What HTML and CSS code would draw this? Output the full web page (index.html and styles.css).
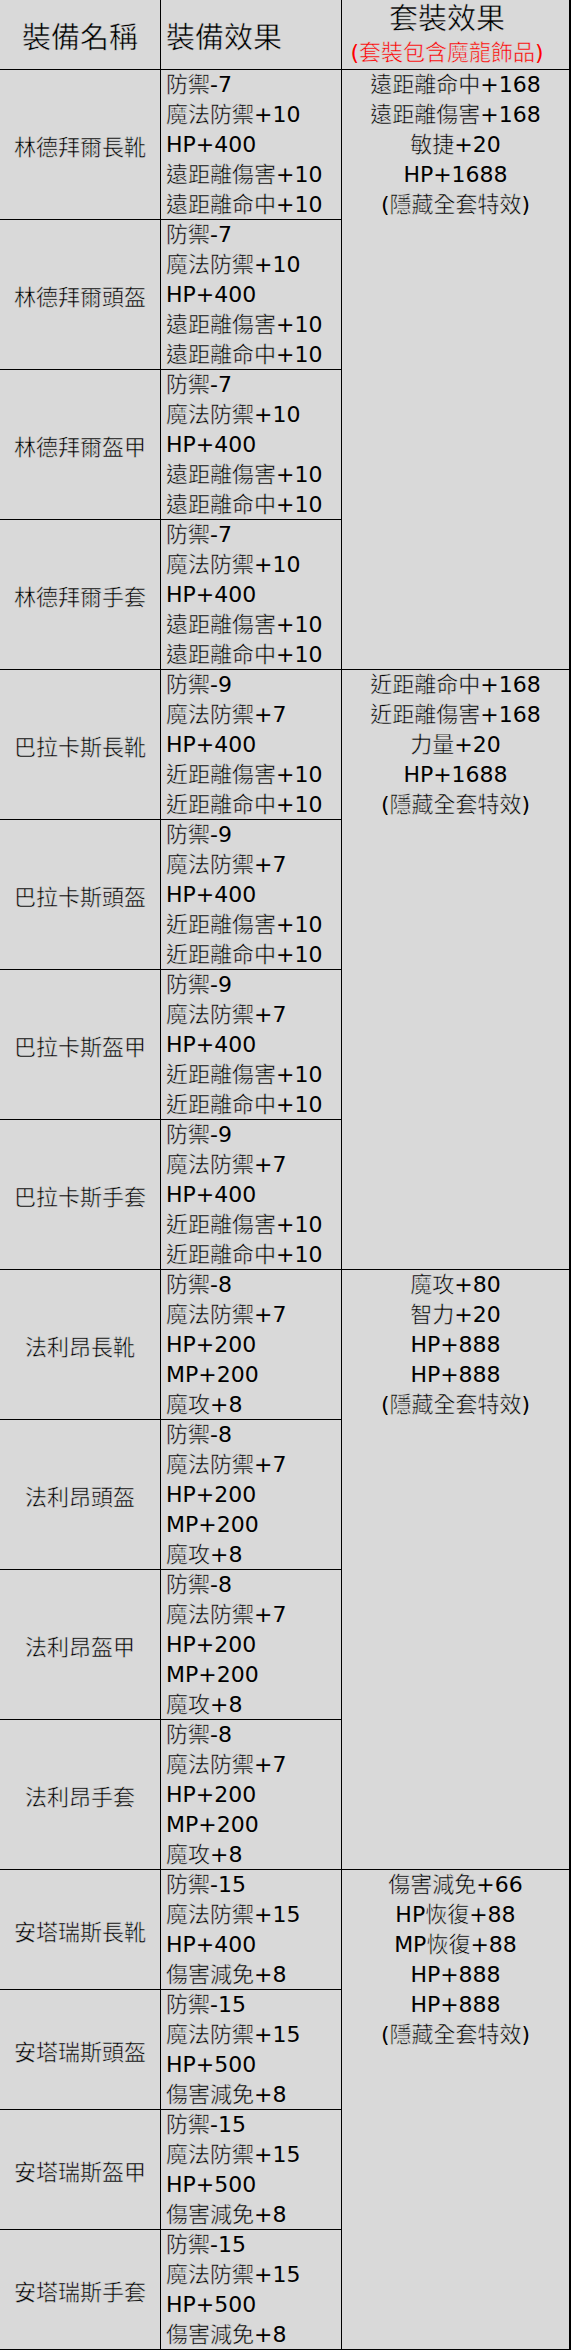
FILE: index.html
```html
<!DOCTYPE html>
<html lang="zh-Hant">
<head>
<meta charset="utf-8">
<title>裝備套裝效果</title>
<link rel="stylesheet" href="styles.css">
</head>
<body>
<div class="table">
  <div class="cell head head-name">裝備名稱</div>
  <div class="cell head head-effect">裝備效果</div>
  <div class="cell head head-set">
    <div class="head-set-title">套裝效果</div>
    <div class="head-set-note"><span class="n">(</span>套裝包含魔龍飾品<span class="n">)</span></div>
  </div>

  <!-- 林德拜爾 -->
  <div class="cell name r2">林德拜爾長靴</div>
  <div class="cell effect r2"><div class="ln">防禦<span class="n">-7</span></div><div class="ln">魔法防禦<span class="n">+10</span></div><div class="ln"><span class="n">HP+400</span></div><div class="ln">遠距離傷害<span class="n">+10</span></div><div class="ln">遠距離命中<span class="n">+10</span></div></div>
  <div class="cell set s1"><div class="ln">遠距離命中<span class="n">+168</span></div><div class="ln">遠距離傷害<span class="n">+168</span></div><div class="ln">敏捷<span class="n">+20</span></div><div class="ln"><span class="n">HP+1688</span></div><div class="ln"><span class="n">(</span>隱藏全套特效<span class="n">)</span></div></div>

  <div class="cell name r3">林德拜爾頭盔</div>
  <div class="cell effect r3"><div class="ln">防禦<span class="n">-7</span></div><div class="ln">魔法防禦<span class="n">+10</span></div><div class="ln"><span class="n">HP+400</span></div><div class="ln">遠距離傷害<span class="n">+10</span></div><div class="ln">遠距離命中<span class="n">+10</span></div></div>

  <div class="cell name r4">林德拜爾盔甲</div>
  <div class="cell effect r4"><div class="ln">防禦<span class="n">-7</span></div><div class="ln">魔法防禦<span class="n">+10</span></div><div class="ln"><span class="n">HP+400</span></div><div class="ln">遠距離傷害<span class="n">+10</span></div><div class="ln">遠距離命中<span class="n">+10</span></div></div>

  <div class="cell name r5">林德拜爾手套</div>
  <div class="cell effect r5"><div class="ln">防禦<span class="n">-7</span></div><div class="ln">魔法防禦<span class="n">+10</span></div><div class="ln"><span class="n">HP+400</span></div><div class="ln">遠距離傷害<span class="n">+10</span></div><div class="ln">遠距離命中<span class="n">+10</span></div></div>

  <!-- 巴拉卡斯 -->
  <div class="cell name r6">巴拉卡斯長靴</div>
  <div class="cell effect r6"><div class="ln">防禦<span class="n">-9</span></div><div class="ln">魔法防禦<span class="n">+7</span></div><div class="ln"><span class="n">HP+400</span></div><div class="ln">近距離傷害<span class="n">+10</span></div><div class="ln">近距離命中<span class="n">+10</span></div></div>
  <div class="cell set s2"><div class="ln">近距離命中<span class="n">+168</span></div><div class="ln">近距離傷害<span class="n">+168</span></div><div class="ln">力量<span class="n">+20</span></div><div class="ln"><span class="n">HP+1688</span></div><div class="ln"><span class="n">(</span>隱藏全套特效<span class="n">)</span></div></div>

  <div class="cell name r7">巴拉卡斯頭盔</div>
  <div class="cell effect r7"><div class="ln">防禦<span class="n">-9</span></div><div class="ln">魔法防禦<span class="n">+7</span></div><div class="ln"><span class="n">HP+400</span></div><div class="ln">近距離傷害<span class="n">+10</span></div><div class="ln">近距離命中<span class="n">+10</span></div></div>

  <div class="cell name r8">巴拉卡斯盔甲</div>
  <div class="cell effect r8"><div class="ln">防禦<span class="n">-9</span></div><div class="ln">魔法防禦<span class="n">+7</span></div><div class="ln"><span class="n">HP+400</span></div><div class="ln">近距離傷害<span class="n">+10</span></div><div class="ln">近距離命中<span class="n">+10</span></div></div>

  <div class="cell name r9">巴拉卡斯手套</div>
  <div class="cell effect r9"><div class="ln">防禦<span class="n">-9</span></div><div class="ln">魔法防禦<span class="n">+7</span></div><div class="ln"><span class="n">HP+400</span></div><div class="ln">近距離傷害<span class="n">+10</span></div><div class="ln">近距離命中<span class="n">+10</span></div></div>

  <!-- 法利昂 -->
  <div class="cell name r10">法利昂長靴</div>
  <div class="cell effect r10"><div class="ln">防禦<span class="n">-8</span></div><div class="ln">魔法防禦<span class="n">+7</span></div><div class="ln"><span class="n">HP+200</span></div><div class="ln"><span class="n">MP+200</span></div><div class="ln">魔攻<span class="n">+8</span></div></div>
  <div class="cell set s3"><div class="ln">魔攻<span class="n">+80</span></div><div class="ln">智力<span class="n">+20</span></div><div class="ln"><span class="n">HP+888</span></div><div class="ln"><span class="n">HP+888</span></div><div class="ln"><span class="n">(</span>隱藏全套特效<span class="n">)</span></div></div>

  <div class="cell name r11">法利昂頭盔</div>
  <div class="cell effect r11"><div class="ln">防禦<span class="n">-8</span></div><div class="ln">魔法防禦<span class="n">+7</span></div><div class="ln"><span class="n">HP+200</span></div><div class="ln"><span class="n">MP+200</span></div><div class="ln">魔攻<span class="n">+8</span></div></div>

  <div class="cell name r12">法利昂盔甲</div>
  <div class="cell effect r12"><div class="ln">防禦<span class="n">-8</span></div><div class="ln">魔法防禦<span class="n">+7</span></div><div class="ln"><span class="n">HP+200</span></div><div class="ln"><span class="n">MP+200</span></div><div class="ln">魔攻<span class="n">+8</span></div></div>

  <div class="cell name r13">法利昂手套</div>
  <div class="cell effect r13"><div class="ln">防禦<span class="n">-8</span></div><div class="ln">魔法防禦<span class="n">+7</span></div><div class="ln"><span class="n">HP+200</span></div><div class="ln"><span class="n">MP+200</span></div><div class="ln">魔攻<span class="n">+8</span></div></div>

  <!-- 安塔瑞斯 -->
  <div class="cell name r14">安塔瑞斯長靴</div>
  <div class="cell effect r14"><div class="ln">防禦<span class="n">-15</span></div><div class="ln">魔法防禦<span class="n">+15</span></div><div class="ln"><span class="n">HP+400</span></div><div class="ln">傷害減免<span class="n">+8</span></div></div>
  <div class="cell set s4"><div class="ln">傷害減免<span class="n">+66</span></div><div class="ln"><span class="n">HP</span>恢復<span class="n">+88</span></div><div class="ln"><span class="n">MP</span>恢復<span class="n">+88</span></div><div class="ln"><span class="n">HP+888</span></div><div class="ln"><span class="n">HP+888</span></div><div class="ln"><span class="n">(</span>隱藏全套特效<span class="n">)</span></div></div>

  <div class="cell name r15">安塔瑞斯頭盔</div>
  <div class="cell effect r15"><div class="ln">防禦<span class="n">-15</span></div><div class="ln">魔法防禦<span class="n">+15</span></div><div class="ln"><span class="n">HP+500</span></div><div class="ln">傷害減免<span class="n">+8</span></div></div>

  <div class="cell name r16">安塔瑞斯盔甲</div>
  <div class="cell effect r16"><div class="ln">防禦<span class="n">-15</span></div><div class="ln">魔法防禦<span class="n">+15</span></div><div class="ln"><span class="n">HP+500</span></div><div class="ln">傷害減免<span class="n">+8</span></div></div>

  <div class="cell name r17">安塔瑞斯手套</div>
  <div class="cell effect r17"><div class="ln">防禦<span class="n">-15</span></div><div class="ln">魔法防禦<span class="n">+15</span></div><div class="ln"><span class="n">HP+500</span></div><div class="ln">傷害減免<span class="n">+8</span></div></div>
</div>
</body>
</html>
```
FILE: styles.css
```css
html, body {
  margin: 0;
  padding: 0;
  background: #d9d9d9;
}

.table {
  display: grid;
  grid-template-columns: 160px 180px 227px;
  grid-template-rows: 69px repeat(12, 149px) repeat(4, 119px);
  gap: 1px;
  width: max-content;
  background: #000;
  border-right: 2px solid #000;
  border-bottom: 1px solid #000;
  font-family: "DejaVu Sans", "Noto Sans CJK TC", sans-serif;
  font-size: 22px;
  font-weight: 400;
  color: #000;
}

/* CJK strokes thinned slightly with a background-coloured outline */
.cell {
  background: #d9d9d9;
  min-width: 0;
  overflow: visible;
  -webkit-text-stroke: 0.5px #d9d9d9;
}

/* Latin letters, digits and signs keep their plain outline */
.n {
  -webkit-text-stroke: 0;
}

.ln {
  height: 30px;
  line-height: 30px;
  white-space: nowrap;
}

.head {
  font-size: 29px;
}

.head-name {
  display: flex;
  align-items: center;
  justify-content: center;
}

.head-effect {
  display: flex;
  align-items: center;
  padding-left: 5px;
}

.head-set {
  display: flex;
  flex-direction: column;
  align-items: center;
  padding-right: 17px;
}

.head-set-title {
  height: 39px;
  line-height: 39px;
}

.head-set-note {
  height: 30px;
  line-height: 28px;
  font-size: 22px;
  color: #ff0000;
}

.name {
  grid-column: 1;
  display: flex;
  align-items: center;
  justify-content: center;
  white-space: nowrap;
}

.effect {
  grid-column: 2;
  display: flex;
  flex-direction: column;
  justify-content: center;
  padding-left: 5px;
}

.set {
  grid-column: 3;
  text-align: center;
}

.r2 { grid-row: 2; }
.r3 { grid-row: 3; }
.r4 { grid-row: 4; }
.r5 { grid-row: 5; }
.r6 { grid-row: 6; }
.r7 { grid-row: 7; }
.r8 { grid-row: 8; }
.r9 { grid-row: 9; }
.r10 { grid-row: 10; }
.r11 { grid-row: 11; }
.r12 { grid-row: 12; }
.r13 { grid-row: 13; }
.r14 { grid-row: 14; }
.r15 { grid-row: 15; }
.r16 { grid-row: 16; }
.r17 { grid-row: 17; }

.s1 { grid-row: 2 / span 4; }
.s2 { grid-row: 6 / span 4; }
.s3 { grid-row: 10 / span 4; }
.s4 { grid-row: 14 / span 4; }
```
